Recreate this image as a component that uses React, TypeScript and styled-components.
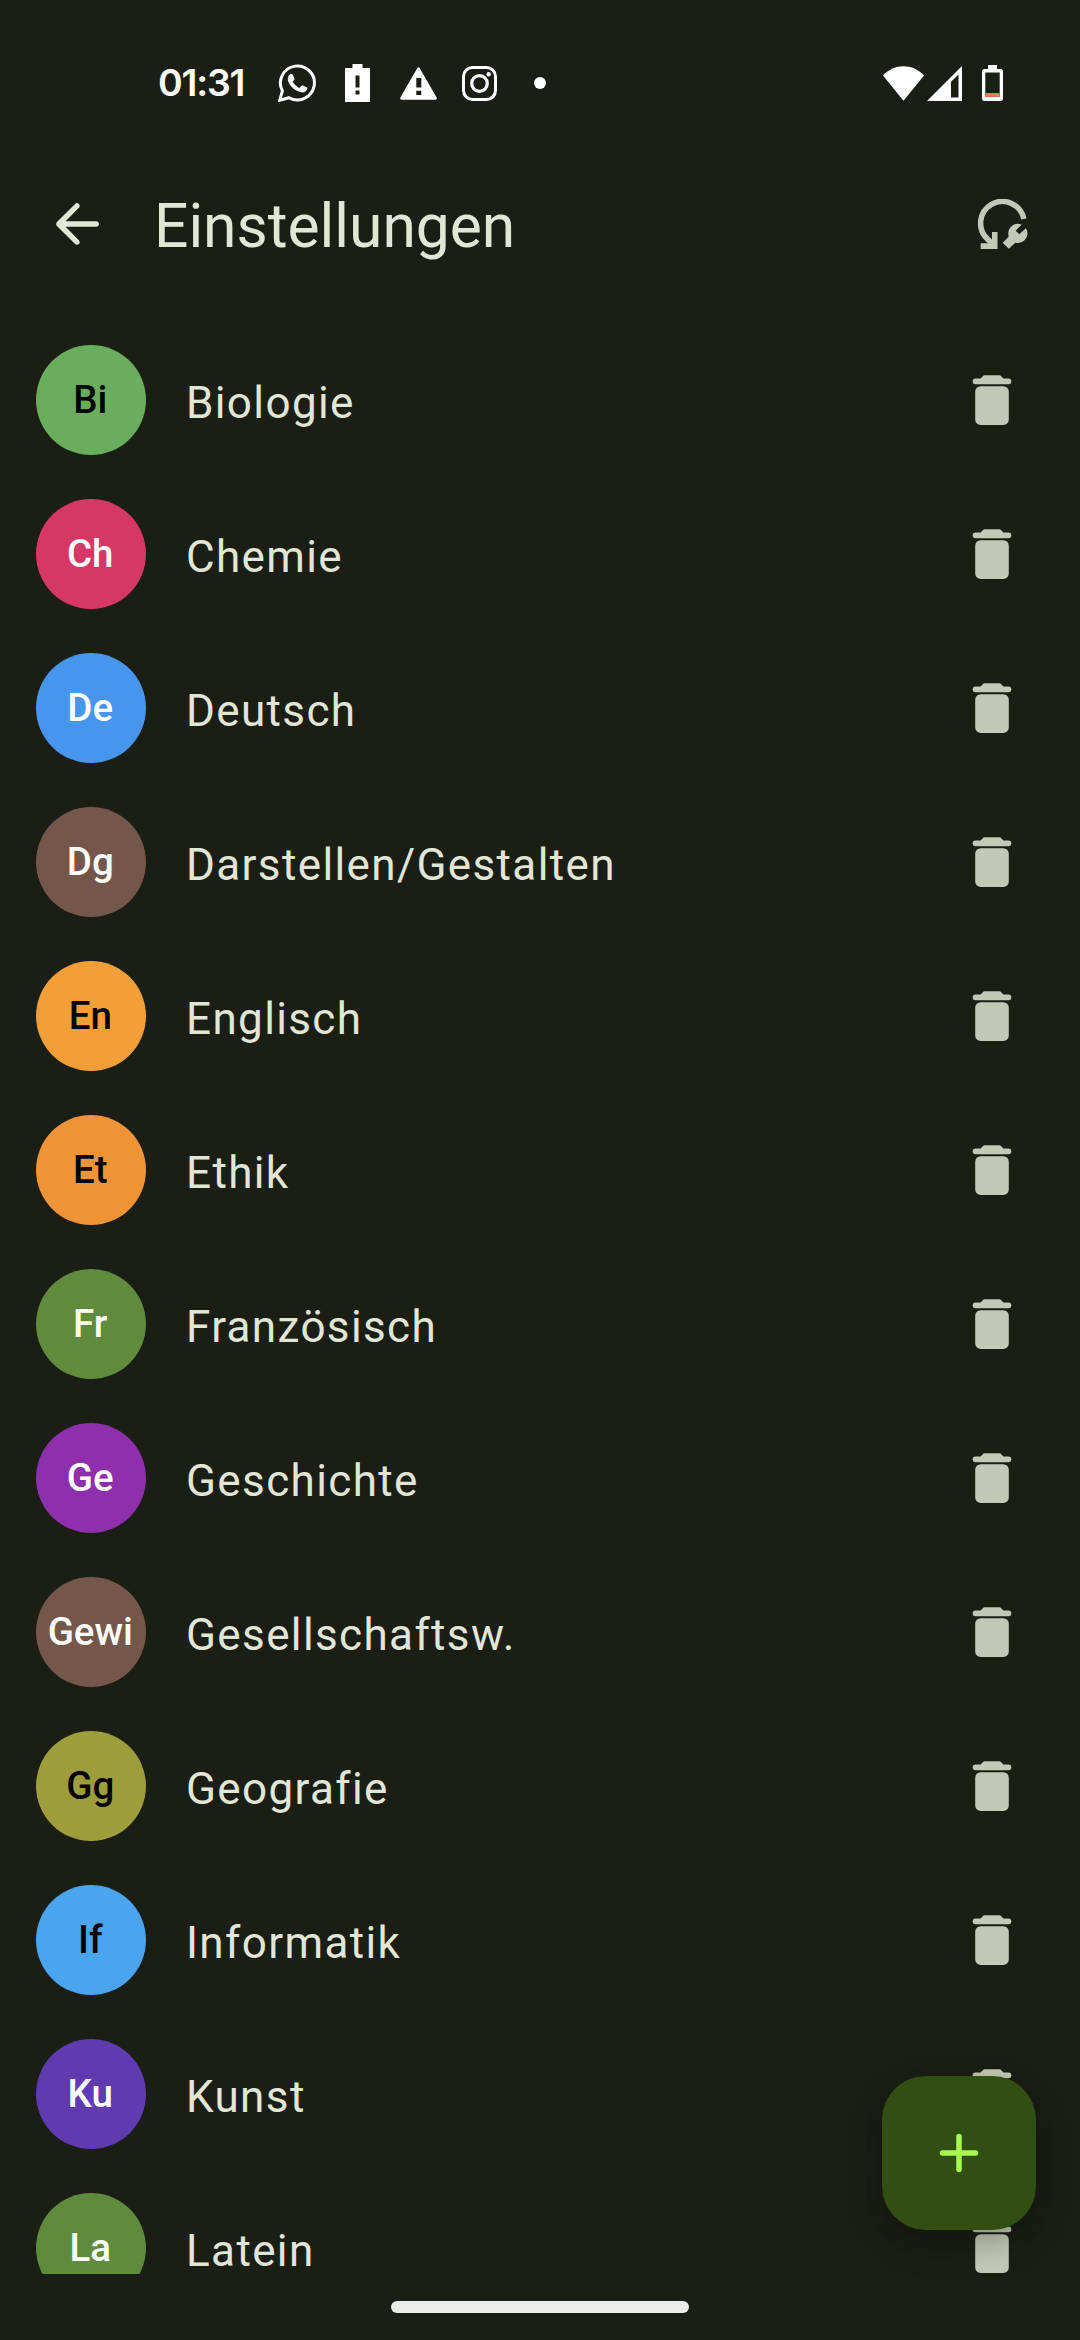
import React from "react";
import styled, { createGlobalStyle } from "styled-components";

const GlobalStyle = createGlobalStyle`
  *, *::before, *::after { box-sizing: border-box; }
  html, body { margin: 0; padding: 0; background: #1b1e15; }
  body { overflow: hidden; }
  svg { display: block; flex: none; }
`;

const Screen = styled.div`
  position: relative;
  display: flex;
  flex-direction: column;
  width: 1080px;
  height: 2340px;
  overflow: hidden;
  background: #1b1e15;
  color: #e1e6d5;
  font-family: Roboto, "Noto Sans", sans-serif;
`;

const StatusBar = styled.header`
  display: flex;
  align-items: center;
  justify-content: space-between;
  height: 166px;
  padding: 0 77px 0 158px;
  color: #fff;
`;

const Notifications = styled.div`
  display: flex;
  align-items: center;
`;

const Clock = styled.span`
  width: 120px;
  font: 600 37.5px/44px Inter, Roboto, sans-serif;
  letter-spacing: -1.2px;
  white-space: nowrap;
`;

const Slot = styled.span<{ $width: number; $gap?: number }>`
  display: flex;
  justify-content: center;
  width: ${(p) => p.$width}px;
  margin-left: ${(p) => p.$gap ?? 0}px;
`;

const Dot = styled.span`
  width: 12px;
  height: 12px;
  border-radius: 50%;
  background: #fff;
`;

const AppBar = styled.div`
  display: flex;
  align-items: center;
  height: 116px;
  padding: 0 52px 0 44px;
`;

const IconButton = styled.button`
  display: flex;
  padding: 0;
  border: 0;
  background: none;
  color: inherit;
`;

const Title = styled.h1`
  flex: 1;
  margin: 4px 0 0 44px;
  font-size: 60.5px;
  font-weight: 400;
  line-height: 77px;
`;

const List = styled.ul`
  height: 1992px;
  margin: 0;
  padding: 41px 0 0;
  overflow: hidden;
  list-style: none;
`;

const Row = styled.li`
  display: flex;
  align-items: center;
  height: 154px;
  padding: 0 55px 0 36px;
`;

const Badge = styled.span<{ $bg: string; $dark?: boolean }>`
  display: flex;
  align-items: center;
  justify-content: center;
  width: 110px;
  height: 110px;
  padding: 0 1.5px 2px 0;
  border-radius: 50%;
  background: ${(p) => p.$bg};
  color: ${(p) => (p.$dark ? "#000" : "#fff")};
  font-size: 38.5px;
  font-weight: 500;
  line-height: 55px;
`;

const Name = styled.span`
  flex: 1;
  margin: 6px 0 0 40px;
  font-size: 44px;
  line-height: 44px;
  letter-spacing: 1.375px;
`;

const Delete = styled(IconButton)`
  color: #c3c9b6;
`;

const Reset = styled(IconButton)`
  color: #c3c9b6;
`;

const Fab = styled.button`
  position: absolute;
  right: 44px;
  bottom: 110px;
  display: flex;
  align-items: center;
  justify-content: center;
  width: 154px;
  height: 154px;
  padding: 0;
  border: 0;
  border-radius: 44px;
  background: #314f12;
  color: #a6fa50;
  box-shadow: 0 14px 36px rgba(0, 0, 0, 0.2), 0 8px 20px rgba(0, 0, 0, 0.1);
`;

const NavBar = styled.footer`
  display: flex;
  flex: 1;
  align-items: center;
  justify-content: center;
`;

const Handle = styled.span`
  width: 298px;
  height: 12px;
  border-radius: 6px;
  background: #ececea;
`;

const WhatsAppIcon = () => (
  <svg width="38" height="38" viewBox="0 0 38 38">
    <path d="M1.8 36.2l2.6-9.3A17 17 0 1 1 11 33.700z" fill="none" stroke="currentColor" strokeWidth="3" />
    <path
      d="M12.300 10.200c1-.5 2.200-.3 2.600.6l1.500 3.600c.3.700 0 1.300-.5 1.900l-1.200 1.500c1.600 2.900 3.700 4.700 6.800 6.100l1.700-2c.5-.6 1-.7 1.700-.4l3.700 1.800c.8.400.8 1 .5 2-.7 2.300-3.200 3.400-5.300 3-6.600-1.200-12.100-6-13.800-11.600-.7-2.600.4-5.500 2.300-6.500z"
      fill="currentColor"
    />
  </svg>
);

const BatteryAlertIcon = () => (
  <svg width="25" height="38" viewBox="0 0 25 38">
    <path
      fillRule="evenodd"
      d="M7.500 0h10v4H25v34H0V4h7.500zM10.500 11.500v12h4v-12zM10.500 26.500v4h4v-4z"
      fill="currentColor"
    />
  </svg>
);

const WarningIcon = () => (
  <svg width="37" height="33" viewBox="0 0 37 33">
    <path
      fillRule="evenodd"
      d="M17.500.8q1-1.300 2 0L36.600 30.600q.8 1.900-1.200 2.100H1.600q-2-.2-1.200-2.100zM16.300 11v9.500h5V11zM16.300 23.700V28h5v-4.300z"
      fill="currentColor"
    />
  </svg>
);

const InstagramIcon = () => (
  <svg width="35" height="35" viewBox="0 0 35 35" fill="none" stroke="currentColor">
    <rect x="1.500" y="1.500" width="32" height="32" rx="9" strokeWidth="3" />
    <circle cx="17.500" cy="17.500" r="7.800" strokeWidth="3.200" />
    <circle cx="26.700" cy="8.300" r="2.200" fill="currentColor" stroke="none" />
  </svg>
);

const WifiIcon = () => (
  <svg width="41" height="35" viewBox="0 0 41 35">
    <path d="M20.500 34.800L0 9.500C5.500 3.300 13 .2 20.500.2S35.500 3.300 41 9.500z" fill="currentColor" />
  </svg>
);

const SignalIcon = () => (
  <svg width="35" height="35" viewBox="0 0 35 35">
    <path fillRule="evenodd" d="M35 0v35H0zM31.500 8.500l-7.500 7.300V31.500h7.500z" fill="currentColor" />
  </svg>
);

const BatteryIcon = () => (
  <svg width="21" height="36" viewBox="0 0 21 36">
    <path
      fillRule="evenodd"
      d="M6 0h9v4h3.500q2.500 0 2.500 2.500v27q0 2.500-2.500 2.500h-16Q0 36 0 33.500v-27Q0 4 2.500 4H6zM3.300 7.500v24.300h14.400V7.500z"
      fill="currentColor"
    />
    <path d="M3.300 28h14.400v3.800H3.300z" fill="#f0795a" />
  </svg>
);

const BackIcon = () => (
  <svg width="66" height="66" viewBox="0 0 24 24">
    <path
      d="M19 11H7.830l4.880-4.880c.39-.39.39-1.030 0-1.420-.39-.39-1.020-.39-1.410 0l-6.590 6.590c-.39.39-.39 1.020 0 1.410l6.590 6.590c.39.39 1.020.39 1.410 0 .39-.39.39-1.020 0-1.410L7.830 13H19c.55 0 1-.45 1-1s-.45-1-1-1z"
      fill="currentColor"
    />
  </svg>
);

const ResetIcon = () => (
  <svg width="50" height="50" viewBox="85 57 150 150">
    <path d="M222.500 117A65.500 65.500 0 1 0 115 179l12 10" fill="none" stroke="currentColor" strokeWidth="16.500" />
    <path d="M127 156h16.500v51H93v-17h34z" fill="currentColor" />
    <path
      d="M159 188l18-18c-5-19 7-37 26-38.500 5-.3 9 .5 13 2.500l-18 18 11 11 19.500-18.500c2 4 5 5.500 5 15.500-.5 19-18 32.500-36.500 28.500L177.500 206z"
      fill="currentColor"
    />
  </svg>
);

const TrashIcon = () => (
  <svg width="66" height="66" viewBox="0 0 66 66">
    <path
      d="M16.500 11.500h33a2.800 2.800 0 0 1 0 5.700h-33a2.800 2.800 0 0 1 0-5.700zM26 8.300h14q1.500 0 2.500 1.200l2.300 2.500H21.200l2.300-2.500q1-1.200 2.500-1.200z"
      fill="currentColor"
    />
    <rect x="16.200" y="19.200" width="33.600" height="38.700" rx="5.500" fill="currentColor" />
  </svg>
);

const PlusIcon = () => (
  <svg width="66" height="66" viewBox="0 0 24 24">
    <path d="M12 6v12M6 12h12" fill="none" stroke="currentColor" strokeWidth="2" strokeLinecap="round" />
  </svg>
);

type Subject = { short: string; name: string; color: string; dark?: boolean };

const subjects: Subject[] = [
  { short: "Bi", name: "Biologie", color: "#69ae5c", dark: true },
  { short: "Ch", name: "Chemie", color: "#d53865" },
  { short: "De", name: "Deutsch", color: "#4895ee" },
  { short: "Dg", name: "Darstellen/Gestalten", color: "#74574a" },
  { short: "En", name: "Englisch", color: "#f29f39", dark: true },
  { short: "Et", name: "Ethik", color: "#ef9436", dark: true },
  { short: "Fr", name: "Französisch", color: "#618b3c" },
  { short: "Ge", name: "Geschichte", color: "#8e2fac" },
  { short: "Gewi", name: "Gesellschaftsw.", color: "#74574a" },
  { short: "Gg", name: "Geografie", color: "#9d9d3c", dark: true },
  { short: "If", name: "Informatik", color: "#4ba5ee", dark: true },
  { short: "Ku", name: "Kunst", color: "#603aaf" },
  { short: "La", name: "Latein", color: "#618b3c" },
];

export default function App() {
  return (
    <>
      <GlobalStyle />
      <Screen>
        <StatusBar>
          <Notifications>
            <Clock>01:31</Clock>
            <Slot $width={38}><WhatsAppIcon /></Slot>
            <Slot $width={25} $gap={29}><BatteryAlertIcon /></Slot>
            <Slot $width={37} $gap={30}><WarningIcon /></Slot>
            <Slot $width={35} $gap={25}><InstagramIcon /></Slot>
            <Slot $width={12} $gap={37}><Dot /></Slot>
          </Notifications>
          <Notifications>
            <WifiIcon />
            <Slot $width={35} $gap={3}><SignalIcon /></Slot>
            <Slot $width={21} $gap={20}><BatteryIcon /></Slot>
          </Notifications>
        </StatusBar>
        <AppBar>
          <IconButton aria-label="Zurück"><BackIcon /></IconButton>
          <Title>Einstellungen</Title>
          <Reset aria-label="Zurücksetzen"><ResetIcon /></Reset>
        </AppBar>
        <List>
          {subjects.map((s) => (
            <Row key={s.short}>
              <Badge $bg={s.color} $dark={s.dark}>{s.short}</Badge>
              <Name>{s.name}</Name>
              <Delete aria-label="Löschen"><TrashIcon /></Delete>
            </Row>
          ))}
        </List>
        <NavBar><Handle /></NavBar>
        <Fab aria-label="Hinzufügen"><PlusIcon /></Fab>
      </Screen>
    </>
  );
}
